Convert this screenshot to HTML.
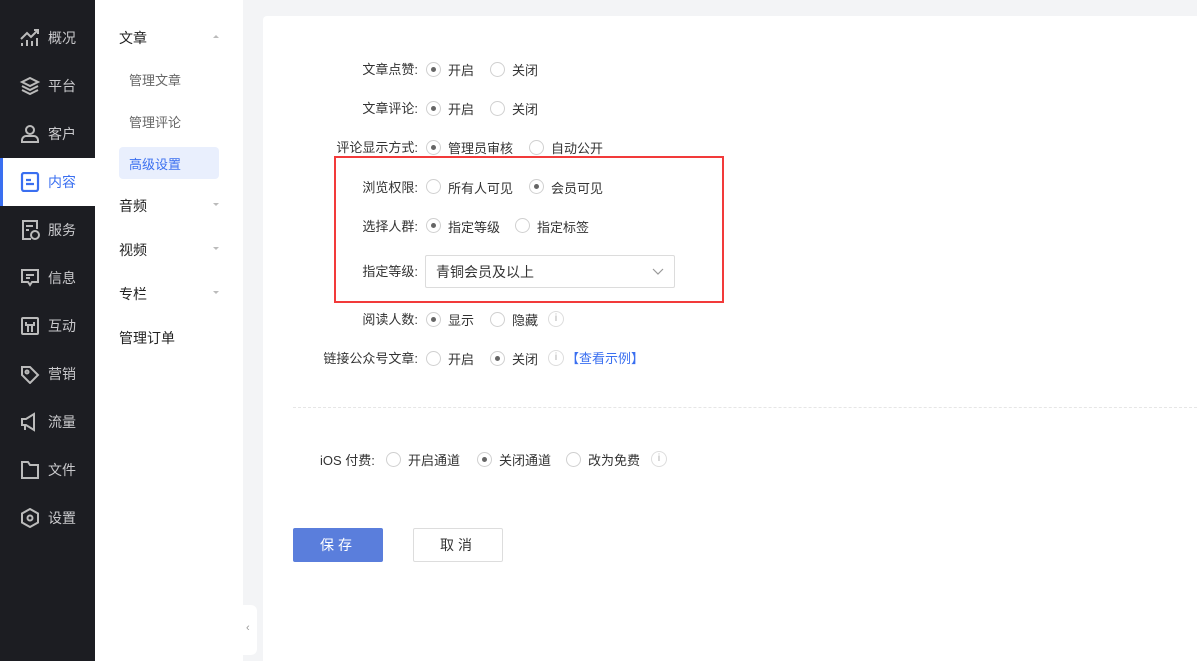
<!DOCTYPE html><html><head><meta charset="utf-8"><style>
*{margin:0;padding:0;box-sizing:border-box}
body{width:1197px;height:661px;overflow:hidden;background:#f3f4f6;font-family:"Liberation Sans","Noto Sans CJK SC",sans-serif;font-size:13px;color:#333;position:relative}
.a{position:absolute;white-space:nowrap}
#nav{position:absolute;left:0;top:0;width:95px;height:661px;background:#1c1d22}
.ni{position:absolute;left:0;width:95px;height:48px;color:#c9c9cc;font-size:14px}
.ni span{position:absolute;left:48px;top:14px}
.ni svg{position:absolute;left:19px;top:14px}
.ni.on{background:#fff;color:#3a6ff0;border-left:3px solid #3a6ff0}
.ni.on svg{left:16px}.ni.on span{left:45px}
#sub{position:absolute;left:95px;top:0;width:148px;height:661px;background:#fff}
.car{position:absolute;left:118px;width:0;height:0;border-left:3px solid transparent;border-right:3px solid transparent}
#main{position:absolute;left:263px;top:16px;width:934px;height:645px;background:#fff;border-radius:4px 0 0 0}
.lb{position:absolute;left:260px;width:158px;text-align:right;white-space:nowrap;color:#333}
.r{position:absolute;width:15px;height:15px;border:1px solid #d0d0d0;border-radius:50%;background:#fff}
.r.c::after{content:"";position:absolute;left:4px;top:4px;width:5px;height:5px;border-radius:50%;background:#666}
.t{position:absolute;white-space:nowrap;color:#333}
.i{position:absolute;width:16px;height:16px;border:1px solid #ddd;border-radius:50%;color:#aaa;font-size:10px;text-align:center;line-height:14px}
</style></head><body>
<div id="nav">
<div class="ni" style="top:14px"><svg width="22" height="20" viewBox="0 0 22 20" fill="none" stroke="#bbb" stroke-width="2"><path d="M2 11l6-6 4 4 7-7M15 2h4v4"/><path d="M3 18v-3M8 18v-6M13 18v-5M18 18v-8"/></svg><span>概况</span></div>
<div class="ni" style="top:62px"><svg width="22" height="20" viewBox="0 0 22 20" fill="none" stroke="#bbb" stroke-width="2"><path d="M11 2l8 4-8 4-8-4z M3 10l8 4 8-4 M3 14l8 4 8-4"/></svg><span>平台</span></div>
<div class="ni" style="top:110px"><svg width="22" height="20" viewBox="0 0 22 20" fill="none" stroke="#bbb" stroke-width="2"><circle cx="11" cy="6" r="4"/><path d="M3 18v-2c0-2 2-4 4-4h8c2 0 4 2 4 4v2z"/></svg><span>客户</span></div>
<div class="ni on" style="top:158px"><svg width="22" height="20" viewBox="0 0 22 20" fill="none" stroke="#3a6ff0" stroke-width="2.2"><rect x="3" y="1" width="16" height="18" rx="2"/><path d="M7 8h5M7 12h8"/></svg><span>内容</span></div>
<div class="ni" style="top:206px"><svg width="22" height="20" viewBox="0 0 22 20" fill="none" stroke="#bbb" stroke-width="2"><path d="M12 19H4V1h14v8"/><path d="M7 6h7M7 10h3"/><circle cx="16" cy="15" r="4"/></svg><span>服务</span></div>
<div class="ni" style="top:254px"><svg width="22" height="20" viewBox="0 0 22 20" fill="none" stroke="#bbb" stroke-width="2"><path d="M3 2h16v12h-6l-2 3-2-3H3z M7 7h8M7 10h4"/></svg><span>信息</span></div>
<div class="ni" style="top:302px"><svg width="22" height="20" viewBox="0 0 22 20" fill="none" stroke="#bbb" stroke-width="2"><rect x="3" y="2" width="16" height="16" rx="1"/><path d="M7 6v3h8V6M9 9v7M13 9v7"/></svg><span>互动</span></div>
<div class="ni" style="top:350px"><svg width="22" height="20" viewBox="0 0 22 20" fill="none" stroke="#bbb" stroke-width="2"><path d="M3 3h8l8 8-8 8-8-8z"/><circle cx="8" cy="8" r="1.5"/></svg><span>营销</span></div>
<div class="ni" style="top:398px"><svg width="22" height="20" viewBox="0 0 22 20" fill="none" stroke="#bbb" stroke-width="2"><path d="M3 7h4l8-5v16l-8-5H3z M6 13v5"/></svg><span>流量</span></div>
<div class="ni" style="top:446px"><svg width="22" height="20" viewBox="0 0 22 20" fill="none" stroke="#bbb" stroke-width="2"><path d="M3 2h6l2 3h8v13H3z"/></svg><span>文件</span></div>
<div class="ni" style="top:494px"><svg width="22" height="20" viewBox="0 0 22 20" fill="none" stroke="#bbb" stroke-width="2"><path d="M11 1l8 4.5v9L11 19l-8-4.5v-9z"/><circle cx="11" cy="10" r="2.5"/></svg><span>设置</span></div>
</div>
<div id="sub">
<div class="a" style="left:24px;top:28px;font-size:14px;color:#222">文章</div>
<div class="car" style="top:35px;border-bottom:3px solid #bbb"></div>
<div class="a" style="left:34px;top:70px;color:#666">管理文章</div>
<div class="a" style="left:34px;top:112px;color:#666">管理评论</div>
<div class="a" style="left:24px;top:147px;width:100px;height:32px;background:#e9effd;border-radius:4px;color:#3a6ff0;padding:7px 0 0 10px">高级设置</div>
<div class="a" style="left:24px;top:196px;font-size:14px;color:#222">音频</div>
<div class="car" style="top:203px;border-top:3px solid #bbb"></div>
<div class="a" style="left:24px;top:240px;font-size:14px;color:#222">视频</div>
<div class="car" style="top:247px;border-top:3px solid #bbb"></div>
<div class="a" style="left:24px;top:284px;font-size:14px;color:#222">专栏</div>
<div class="car" style="top:291px;border-top:3px solid #bbb"></div>
<div class="a" style="left:24px;top:328px;font-size:14px;color:#222">管理订单</div>
</div>
<div class="a" style="left:243px;top:605px;width:14px;height:50px;background:#fff;border-radius:0 6px 6px 0;color:#999;font-size:11px;padding:17px 0 0 3px">‹</div>
<div id="main"></div>
<div class="lb" style="top:59px">文章点赞:</div><div class="r c" style="left:426px;top:62px"></div><div class="t" style="left:448px;top:60px">开启</div><div class="r" style="left:490px;top:62px"></div><div class="t" style="left:512px;top:60px">关闭</div>
<div class="lb" style="top:98px">文章评论:</div><div class="r c" style="left:426px;top:101px"></div><div class="t" style="left:448px;top:99px">开启</div><div class="r" style="left:490px;top:101px"></div><div class="t" style="left:512px;top:99px">关闭</div>
<div class="lb" style="top:137px">评论显示方式:</div><div class="r c" style="left:426px;top:140px"></div><div class="t" style="left:448px;top:138px">管理员审核</div><div class="r" style="left:529px;top:140px"></div><div class="t" style="left:551px;top:138px">自动公开</div>
<div class="a" style="left:334px;top:156px;width:390px;height:147px;border:2px solid #f23a3a"></div>
<div class="lb" style="top:177px">浏览权限:</div><div class="r" style="left:426px;top:179px"></div><div class="t" style="left:448px;top:178px">所有人可见</div><div class="r c" style="left:529px;top:179px"></div><div class="t" style="left:551px;top:178px">会员可见</div>
<div class="lb" style="top:216px">选择人群:</div><div class="r c" style="left:426px;top:218px"></div><div class="t" style="left:448px;top:217px">指定等级</div><div class="r" style="left:515px;top:218px"></div><div class="t" style="left:537px;top:217px">指定标签</div>
<div class="lb" style="top:261px">指定等级:</div>
<div class="a" style="left:425px;top:255px;width:250px;height:33px;border:1px solid #dcdcdc;border-radius:2px;padding:6px 0 0 10px;font-size:14px;color:#333">青铜会员及以上<svg style="position:absolute;right:10px;top:12px" width="12" height="8" viewBox="0 0 12 8" fill="none" stroke="#999" stroke-width="1.2"><path d="M1 1l5 5 5-5"/></svg></div>
<div class="lb" style="top:309px">阅读人数:</div><div class="r c" style="left:426px;top:312px"></div><div class="t" style="left:448px;top:310px">显示</div><div class="r" style="left:490px;top:312px"></div><div class="t" style="left:512px;top:310px">隐藏</div><div class="i" style="left:548px;top:311px">i</div>
<div class="lb" style="top:348px">链接公众号文章:</div><div class="r" style="left:426px;top:351px"></div><div class="t" style="left:448px;top:349px">开启</div><div class="r c" style="left:490px;top:351px"></div><div class="t" style="left:512px;top:349px">关闭</div><div class="i" style="left:548px;top:350px">i</div><div class="t" style="left:566px;top:348px;color:#3a6ff0">【查看示例】</div>
<div class="a" style="left:293px;top:407px;width:904px;border-top:1px dashed #e6e6e6"></div>
<div class="t" style="left:320px;top:450px">iOS 付费:</div><div class="r" style="left:386px;top:452px"></div><div class="t" style="left:408px;top:450px">开启通道</div><div class="r c" style="left:477px;top:452px"></div><div class="t" style="left:499px;top:450px">关闭通道</div><div class="r" style="left:566px;top:452px"></div><div class="t" style="left:588px;top:450px">改为免费</div><div class="i" style="left:651px;top:451px">i</div>
<div class="a" style="left:293px;top:528px;width:90px;height:34px;background:#5a7edc;border-radius:2px;color:#fff;text-align:center;line-height:34px;font-size:14px;letter-spacing:4px">保存</div>
<div class="a" style="left:413px;top:528px;width:90px;height:34px;border:1px solid #ddd;border-radius:2px;color:#333;text-align:center;line-height:32px;font-size:14px;letter-spacing:4px">取消</div>
</body></html>
